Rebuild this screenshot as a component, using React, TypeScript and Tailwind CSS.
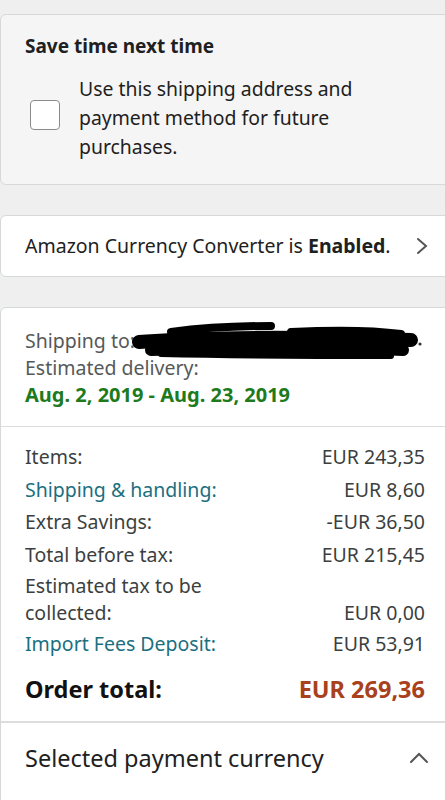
import React from "react"

const font = { fontFamily: '"Noto Sans", "Open Sans", Arial, sans-serif' }

const Row = ({ label, value, link = false }: { label: React.ReactNode; value: string; link?: boolean }) => (
  <div className="flex items-end justify-between leading-[32.5px]">
    <span className={link ? "text-[#1b6f80]" : "text-[#3c3f3f]"}>{label}</span>
    <span className="text-[#3c3f3f]">{value}</span>
  </div>
)

const Redacted = () => (
  <svg width="292" height="42" viewBox="0 0 292 42" className="-my-[8px] -ml-1 inline-block align-middle">
    <g stroke="#000" strokeLinecap="round" fill="none">
      <path d="M8 22 C60 18 140 16 280 20" strokeWidth="14" />
      <path d="M20 30 C90 28 180 26 272 30" strokeWidth="12" />
      <path d="M40 12 C70 8 100 6 140 6" strokeWidth="8" />
      <path d="M160 12 C200 10 240 10 270 14" strokeWidth="8" />
      <path d="M30 34 C120 36 200 36 260 36" strokeWidth="6" />
    </g>
    <circle cx="289" cy="24" r="1.6" fill="#333" />
  </svg>
)

export default function App() {
  return (
    <div className="min-h-[800px] w-[445px] overflow-hidden bg-[#efefef] pt-[14px]" style={font}>
      {/* save time */}
      <div className="w-[460px] rounded-l-md border border-[#d5d9d9] bg-[#f5f5f5] pl-6 pt-[19px] pb-[23px]">
        <div className="text-[19px] font-bold leading-6 text-[#1e2121]">Save time next time</div>
        <div className="mt-[16px] flex items-center">
          <div className="ml-[5px] -mt-[6px] h-[30px] w-[30px] shrink-0 rounded-[4px] border border-[#888c8c] bg-white" />
          <div className="ml-[19px] text-[19.4px] leading-[29px] text-[#1e2121]">
            Use this shipping address and
            <br />
            payment method for future
            <br />
            purchases.
          </div>
        </div>
      </div>

      {/* currency converter */}
      <div className="mt-[30px] flex h-[62px] w-[460px] items-center rounded-l-md border border-[#d5d9d9] bg-white pl-6">
        <span className="text-[19.5px] text-[#1e2121]">
          Amazon Currency Converter is <b>Enabled</b>.
        </span>
        <svg width="14" height="18" viewBox="0 0 14 18" className="ml-[24px]">
          <path d="M3 2 L11 9 L3 16" stroke="#555" strokeWidth="2" fill="none" strokeLinecap="round" />
        </svg>
      </div>

      {/* order summary */}
      <div className="mt-[30px] w-[460px] rounded-l-md border border-[#d5d9d9] bg-white">
        <div className="pl-6 pt-[19px] pb-[18px] text-[19.5px] leading-[27px]">
          <div className="flex h-[27px] items-center text-[#565959]">
            Shipping to:
            <Redacted />
          </div>
          <div className="text-[#565959]">Estimated delivery:</div>
          <div className="text-[20px] font-bold text-[#1d7a1d]">Aug. 2, 2019 - Aug. 23, 2019</div>
        </div>
        <div className="border-t border-[#dddddd] pt-[14px] pb-[14px] pl-6 pr-[34px] text-[19.5px]">
          <Row label="Items:" value="EUR 243,35" />
          <Row label="Shipping & handling:" value="EUR 8,60" link />
          <Row label="Extra Savings:" value="-EUR 36,50" />
          <Row label="Total before tax:" value="EUR 215,45" />
          <div className="flex items-end justify-between pt-[1px] leading-[27px]">
            <span className="text-[#3c3f3f]">
              Estimated tax to be
              <br />
              collected:
            </span>
            <span className="text-[#3c3f3f]">EUR 0,00</span>
          </div>
          <div className="pt-[2px] leading-[32px]">
            <Row label="Import Fees Deposit:" value="EUR 53,91" link />
          </div>
          <div className="mt-[10px] flex items-center justify-between text-[23.5px] font-bold leading-[36px]">
            <span className="text-[#111]">Order total:</span>
            <span className="text-[#a8411c]">EUR 269,36</span>
          </div>
        </div>
        <div className="flex h-[90px] items-start justify-between border-t-2 border-[#dddddd] pl-6 pr-[30px] pt-[19px]">
          <span className="text-[23.5px] leading-8 text-[#1e2121]">Selected payment currency</span>
          <svg width="20" height="12" viewBox="0 0 20 12" className="mt-[10px]">
            <path d="M2 10 L10 2 L18 10" stroke="#555" strokeWidth="2" fill="none" strokeLinecap="round" />
          </svg>
        </div>
      </div>
    </div>
  )
}
